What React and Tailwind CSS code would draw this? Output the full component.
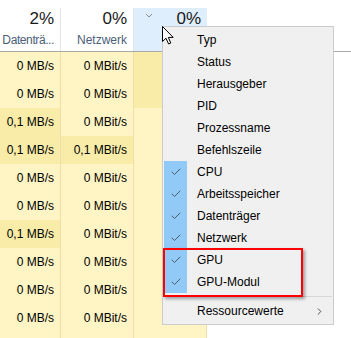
import { Check, ChevronRight } from "lucide-react";

const rows = [
    { disk: "0 MB/s", net: "0 MBit/s", gpuDark: true },
    { disk: "0 MB/s", net: "0 MBit/s", gpuDark: true },
    { disk: "0,1 MB/s", diskDark: true, net: "0 MBit/s" },
    { disk: "0,1 MB/s", diskDark: true, net: "0,1 MBit/s", netDark: true },
    { disk: "0 MB/s", net: "0 MBit/s" },
    { disk: "0 MB/s", net: "0 MBit/s" },
    { disk: "0,1 MB/s", diskDark: true, net: "0 MBit/s" },
    { disk: "0 MB/s", net: "0 MBit/s" },
    { disk: "0 MB/s", net: "0 MBit/s" },
    { disk: "0 MB/s", net: "0 MBit/s" },
    { disk: "", net: "" },
];

const menuItems = [
    { label: "Typ" },
    { label: "Status" },
    { label: "Herausgeber" },
    { label: "PID" },
    { label: "Prozessname" },
    { label: "Befehlszeile" },
    { label: "CPU", checked: true },
    { label: "Arbeitsspeicher", checked: true },
    { label: "Datenträger", checked: true },
    { label: "Netzwerk", checked: true },
    { label: "GPU", checked: true },
    { label: "GPU-Modul", checked: true },
];

const font = { fontFamily: '"Segoe UI", "Liberation Sans", Arial, sans-serif' };

const App = () => {
    return (
        <div className="relative w-[351px] h-[338px] overflow-hidden bg-white text-[12px] text-black" style={font}>
            {/* header */}
            <div className="flex h-[52px] border-b border-[#a9a9a9] pt-[8px]">
                <div className="w-[61px] border-r border-[#e5e5e5] flex flex-col items-end pr-[6px]">
                    <div className="text-[17px] leading-[22px] text-[#1a1a1a]">2%</div>
                    <div className="leading-[16px] mt-[2px] text-[#4c607a] whitespace-nowrap tracking-[-0.4px]">Datenträ...</div>
                </div>
                <div className="w-[73px] border-r border-[#e5e5e5] flex flex-col items-end pr-[6px]">
                    <div className="text-[17px] leading-[22px] text-[#1a1a1a]">0%</div>
                    <div className="leading-[16px] mt-[2px] text-[#4c607a]">Netzwerk</div>
                </div>
                <div className="w-[73px] bg-[#dfeefc] flex justify-between pr-[6px] pl-[11px]">
                    <svg width="8" height="5" viewBox="0 0 8 5" className="mt-[5px]">
                        <polyline points="1,1 4,4 7,1" fill="none" stroke="#8a8a8a" strokeWidth="1" />
                    </svg>
                    <div className="text-[17px] leading-[22px] text-[#1a1a1a]">0%</div>
                </div>
            </div>

            {/* rows */}
            {rows.map((r, i) => (
                <div key={i} className="flex h-[28px]">
                    <div className={`w-[61px] border-r border-[#f0dfa6] flex items-center justify-end pr-[6px] ${r.diskDark ? "bg-[#f9eca8]" : "bg-[#fff4c4]"}`}>
                        {r.disk}
                    </div>
                    <div className={`w-[73px] border-r border-[#f0dfa6] flex items-center justify-end pr-[6px] ${r.netDark ? "bg-[#f9eca8]" : "bg-[#fff4c4]"}`}>
                        {r.net}
                    </div>
                    <div className={`w-[73px] border-r border-[#f0dfa6] ${r.gpuDark ? "bg-[#f9eca8]" : "bg-[#fff4c4]"}`}></div>
                </div>
            ))}

            {/* context menu */}
            <div className="absolute left-[162px] top-[26px] w-[172px] bg-[#f0f0f0] border border-[#cccccc] py-[2px]">
                {menuItems.map((m) => (
                    <div key={m.label} className="flex h-[22px] items-center">
                        <div className={`ml-[1px] w-[23px] h-full flex items-center justify-center ${m.checked ? "bg-[#91c9f7]" : ""}`}>
                            {m.checked && <Check size={12} strokeWidth={1.5} color="#3a3a3a" />}
                        </div>
                        <span className="ml-[10px]">{m.label}</span>
                    </div>
                ))}
                <div className="mx-[1px] my-[3px] h-px bg-[#d7d7d7]"></div>
                <div className="flex h-[22px] items-center">
                    <div className="ml-[1px] w-[23px]"></div>
                    <span className="ml-[10px] flex-1">Ressourcewerte</span>
                    <ChevronRight size={11} strokeWidth={1.8} color="#333" className="mr-[8px]" />
                </div>
            </div>

            {/* red highlight */}
            <div className="absolute left-[163px] top-[248px] w-[140px] h-[49px] border-2 border-[#ff0000] shadow-[2px_2px_3px_rgba(0,0,0,0.35)]"></div>

            {/* mouse cursor */}
            <svg className="absolute left-[162px] top-[26px]" width="13" height="19" viewBox="0 0 13 19">
                <polygon points="0.5,0.5 0.5,15.5 4,12.2 6.6,18 8.8,17 6.3,11.4 11.2,11.4" fill="#fff" stroke="#000" strokeWidth="1" strokeLinejoin="miter" />
            </svg>
        </div>
    );
};

export default App;
